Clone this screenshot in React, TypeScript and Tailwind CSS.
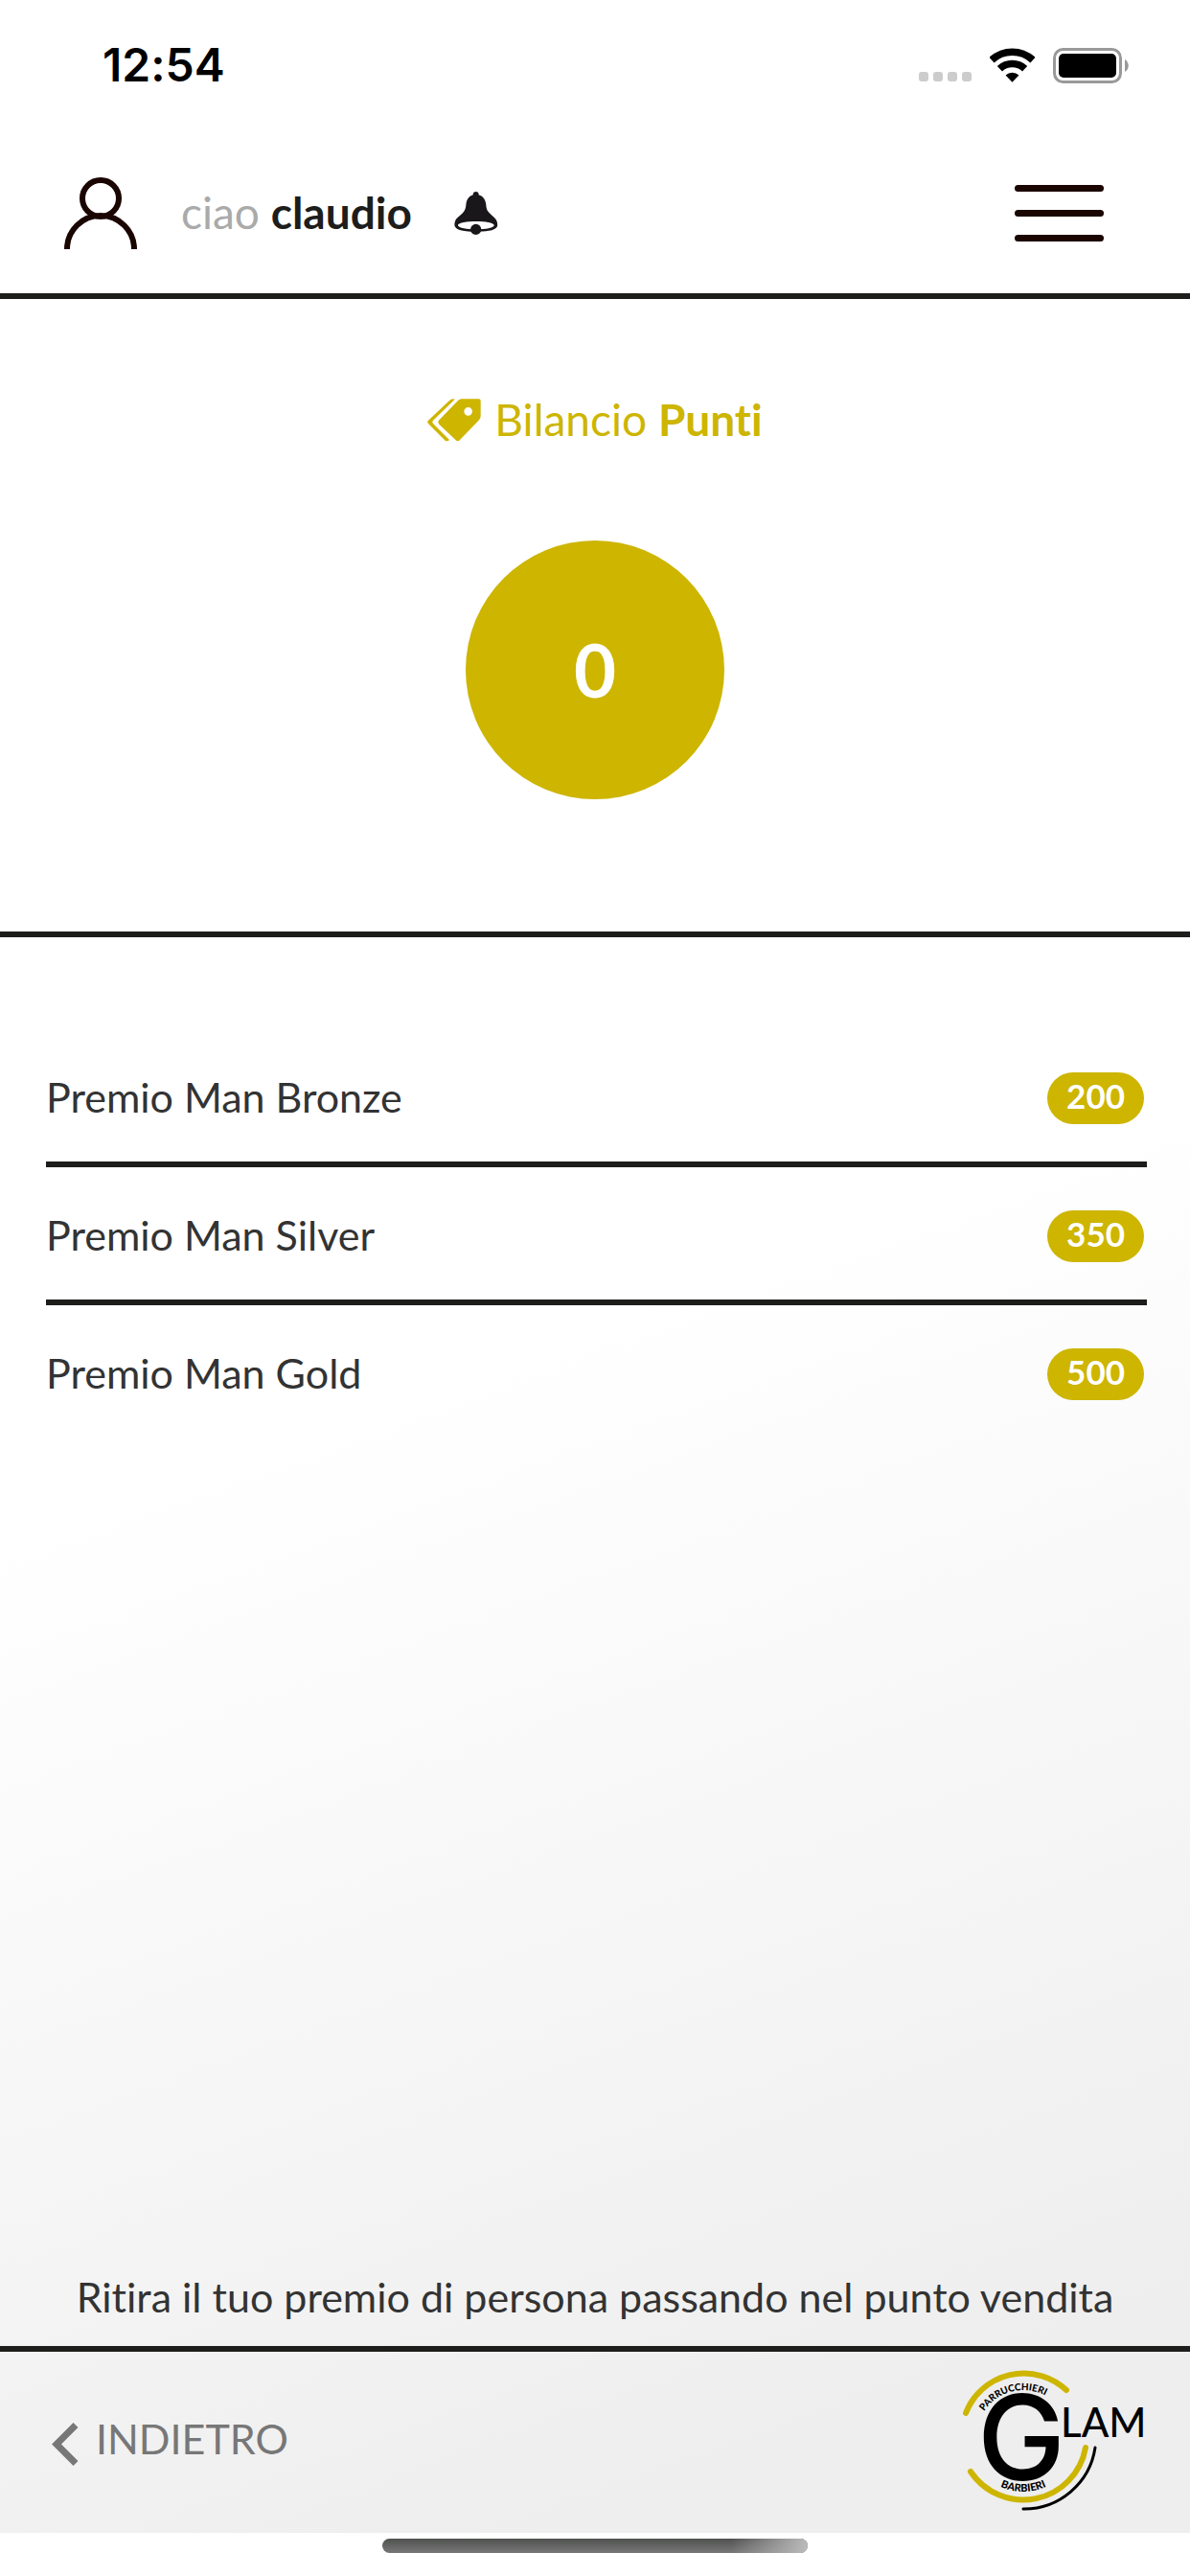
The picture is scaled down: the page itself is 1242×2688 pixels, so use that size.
import React from 'react';

const PRIZES = [
  { name: 'Premio Man Bronze', points: 200 },
  { name: 'Premio Man Silver', points: 350 },
  { name: 'Premio Man Gold', points: 500 },
];

const WifiIcon = () => (
  <svg viewBox="396 148 142 107" className="w-[47px] h-9" fill="none" stroke="#000">
    <path d="M402 185.5A95 95 0 0 1 532 185.5" strokeWidth="23" />
    <path d="M427.4 212.6A58 58 0 0 1 506.6 212.6" strokeWidth="23" />
    <path d="M467 255L446 233A31 31 0 0 1 488 233Z" fill="#000" stroke="none" />
  </svg>
);

const BatteryIcon = () => (
  <svg viewBox="0 0 79 37" className="w-[79px] h-[37px]">
    <rect x="1.5" y="1.5" width="69" height="34" rx="9" fill="none" stroke="#999" strokeWidth="3" />
    <rect x="6" y="6" width="60" height="25" rx="5" fill="#000" />
    <path d="M75 12C80 15 80 22 75 25Z" fill="#999" />
  </svg>
);

const UserIcon = () => (
  <svg viewBox="0 0 76 75" className="w-[76px] h-[75px]" fill="none" stroke="#1a0500" strokeWidth="6">
    <circle cx="38" cy="22" r="19" />
    <path d="M3 75A35 35 0 0 1 73 75" />
  </svg>
);

const BellIcon = () => (
  <svg viewBox="98 68 138 136" className="w-[46px] h-[45px]" fill="#1a171b">
    <circle cx="166" cy="77" r="9" />
    <path
      fillRule="evenodd"
      d="M166 76C148 77 137 89 135 108C134 128 126 135 110 148C100 156 98 166 99 176C104 190 130 194 166 194C202 194 230 190 234 176C235 162 230 154 219 145C206 134 199 128 198 108C196 89 184 77 166 76ZM109 174C112 166 138 162 166 162C196 162 221 166 224 174C221 183 196 187 166 187C138 187 112 183 109 174Z"
    />
    <circle cx="166" cy="187" r="17" />
  </svg>
);

const TagsIcon = () => (
  <svg viewBox="80 106 168 135" className="w-14 h-[45px]" fill="#cdb500">
    <path
      fillRule="evenodd"
      d="M187 107H241Q247 107 247 113V160Q247 168 242 173L182 235Q176 242 169 236L117 186Q111 179 117 173L176 112Q181 107 187 107ZM221 146A13 13 0 1 0 195 146A13 13 0 1 0 221 146Z"
    />
    <path d="M166 108Q156 105 149 112L83 174Q78 179 83 184L136 237Q142 242 149 235L98 184Q94 179 98 174Z" />
  </svg>
);

const GlamLogo = () => (
  <svg viewBox="1004 2464 194 168" className="w-[194px] h-[168px] font-[Lato,sans-serif]" role="img" aria-label="Glam">
    <defs>
      <path id="arc-top" d="M1019 2542A49 49 0 0 1 1117 2542" />
      <path id="arc-bottom" d="M1011 2542A57 57 0 0 0 1125 2542" />
    </defs>
    <g fill="none" strokeLinecap="round">
      <path d="M1008 2517A65 65 0 0 1 1113 2493" stroke="#cdb500" strokeWidth="6" />
      <path d="M1013 2578A66 66 0 0 0 1133 2553" stroke="#cdb500" strokeWidth="6" />
      <path d="M1068 2617A75 75 0 0 0 1143 2553" stroke="#000" strokeWidth="3" />
    </g>
    <text x="1066" y="2587" textAnchor="middle" fontSize="123" fontWeight="500" className="font-[Inter,sans-serif]">G</text>
    <text x="1107" y="2542" fontSize="42" fontWeight="500">LAM</text>
    <text fontSize="10" fontWeight="900">
      <textPath href="#arc-top" startOffset="42%" textAnchor="middle">PARRUCCHIERI</textPath>
    </text>
    <text fontSize="11" fontWeight="900">
      <textPath href="#arc-bottom" startOffset="50%" textAnchor="middle">BARBIERI</textPath>
    </text>
  </svg>
);

const StatusBar = () => (
  <div className="h-[136px] flex items-center justify-between pl-[107px] pr-16 text-black">
    <span className="font-[Inter,sans-serif] font-semibold text-[48px] leading-none">12:54</span>
    <div className="flex items-center gap-[19px]">
      <div className="flex gap-[5px] mt-6">
        {[0, 1, 2, 3].map((i) => (
          <span key={i} className="w-[10px] h-[10px] rounded-[3px] bg-[#ccc]"></span>
        ))}
      </div>
      <WifiIcon />
      <BatteryIcon />
    </div>
  </div>
);

const Header = () => (
  <header className="h-[176px] pt-[2px] flex items-center pl-[67px] pr-[90px] border-b-6 border-[#1d1d1b]">
    <UserIcon />
    <p className="ml-[46px] text-[46px] leading-none text-[#aaa]">
      ciao <strong className="font-bold text-[#1d1d1b]">claudio</strong>
    </p>
    <button type="button" aria-label="Notifiche" className="ml-11">
      <BellIcon />
    </button>
    <button type="button" aria-label="Menu" className="ml-auto flex flex-col gap-[19px]">
      <span className="w-[93px] h-[7px] rounded-full bg-[#1a0500]"></span>
      <span className="w-[93px] h-[7px] rounded-full bg-[#1a0500]"></span>
      <span className="w-[93px] h-[7px] rounded-full bg-[#1a0500]"></span>
    </button>
  </header>
);

const App: React.FC = () => {
  return (
    <div className="min-h-screen flex flex-col bg-white font-[Lato,sans-serif] [font-variant-ligatures:none] text-[#333]">
      <div className="flex-1 flex flex-col bg-[linear-gradient(160deg,#fff_52%,#eee_92%)]">
        <StatusBar />
        <Header />

        <main className="flex-1 flex flex-col">
          <section className="flex flex-col items-center pt-[90px] pb-[138px] border-b-6 border-[#1d1d1b]">
            <h1 className="flex items-center gap-[14px] text-[46px] leading-[72px] text-[#cdb500]">
              <TagsIcon />
              <span>
                Bilancio <strong className="font-bold">Punti</strong>
              </span>
            </h1>
            <div className="mt-[90px] w-[270px] h-[270px] rounded-full bg-[#cdb500] flex items-center justify-center text-white text-[76px] font-bold leading-none">
              0
            </div>
          </section>

          <ul className="pt-24 pl-12 pr-[45px]">
            {PRIZES.map((prize) => (
              <li
                key={prize.name}
                className="h-36 pt-[6px] pr-[3px] flex items-center justify-between border-b-6 border-[#1d1d1b] last:border-transparent"
              >
                <span className="pb-[2px] text-[43px] leading-[54px]">{prize.name}</span>
                <span className="h-[54px] px-5 rounded-full bg-[#cdb500] text-white text-[35px] leading-[48px] font-bold">
                  {prize.points}
                </span>
              </li>
            ))}
          </ul>

          <p className="mt-auto mb-6 text-center text-[43px] leading-[54px]">
            Ritira il tuo premio di persona passando nel punto vendita
          </p>
        </main>

        <footer className="h-[195px] pl-[54px] pr-11 flex items-center justify-between border-t-6 border-[#1d1d1b]">
          <a href="#" className="flex items-center gap-[18px] pb-2 text-[43px] leading-[54px] text-[#777]">
            <svg viewBox="0 0 28 45" className="w-7 h-[45px] mt-3" fill="none" stroke="#777" strokeWidth="7">
              <path d="M25 2.5L5 22.5L25 42.5" />
            </svg>
            INDIETRO
          </a>
          <GlamLogo />
        </footer>
      </div>

      <div className="h-[45px] pt-[6px]">
        <div className="mx-auto w-[444px] h-[15px] rounded-full bg-linear-to-b from-[#505250] to-[#777] overflow-hidden">
          <div className="ml-auto w-20 h-full bg-linear-to-r from-transparent to-[#bbb]"></div>
        </div>
      </div>
    </div>
  );
};

export default App;
